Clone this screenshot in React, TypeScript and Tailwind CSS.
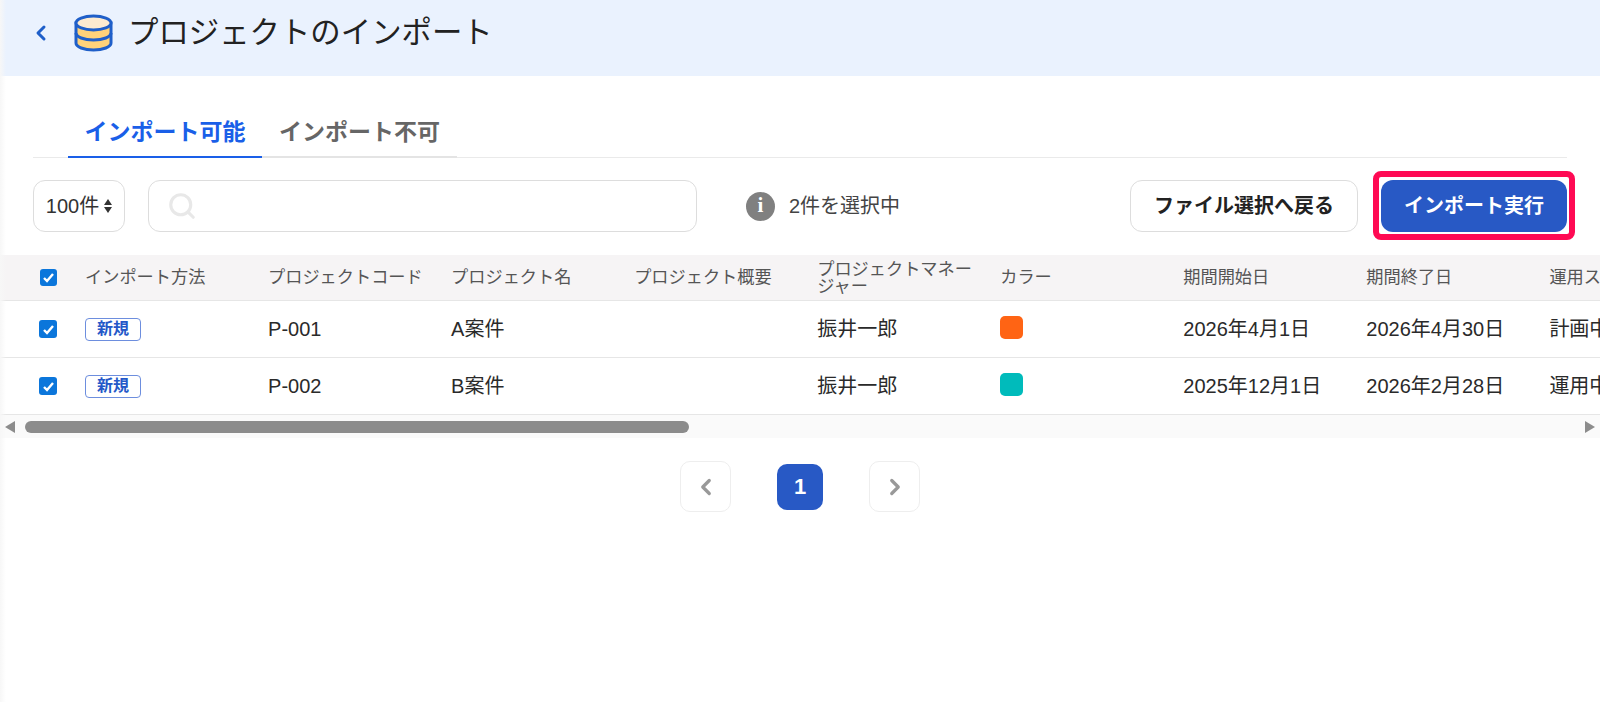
import { ChevronLeft, ChevronRight, Search } from 'lucide-react'

const COLUMNS = [
  'インポート方法',
  'プロジェクトコード',
  'プロジェクト名',
  'プロジェクト概要',
  'プロジェクトマネージャー',
  'カラー',
  '期間開始日',
  '期間終了日',
  '運用ステータス',
]

const ROWS = [
  { code: 'P-001', name: 'A案件', manager: '振井一郎', color: 'bg-[#ff6414]', start: '2026年4月1日', end: '2026年4月30日', status: '計画中' },
  { code: 'P-002', name: 'B案件', manager: '振井一郎', color: 'bg-[#00bbbb]', start: '2025年12月1日', end: '2026年2月28日', status: '運用中' },
]

const GRID = 'grid grid-cols-[85px_repeat(9,183.05px)] w-[1733px] items-center'

function DatabaseIcon() {
  return (
    <svg width="39" height="38" viewBox="0 0 39 38" className="shrink-0">
      <path d="M2 9v20c0 4 8 7 17.500 7S37 33 37 29V9z" fill="#ffd27a" stroke="#1f5fc9" strokeWidth="3" />
      <path d="M2 19c0 4 8 7 17.500 7S37 23 37 19" fill="none" stroke="#1f5fc9" strokeWidth="3" />
      <ellipse cx="19.500" cy="9" rx="17.500" ry="7" fill="#fdebd0" stroke="#1f5fc9" strokeWidth="3" />
    </svg>
  )
}

function Checkbox({ size }: { size: string }) {
  return (
    <span className={`flex items-center justify-center rounded-[3px] bg-[#0b76db] ${size}`}>
      <svg width="13" height="13" viewBox="0 0 13 13">
        <path d="M2 7l3 3 6-7" fill="none" stroke="#fff" strokeWidth="2.400" />
      </svg>
    </span>
  )
}

export default function App() {
  return (
    <div className="relative h-[702px] w-[1600px] overflow-hidden bg-white font-['Liberation_Sans','Noto_Sans_CJK_JP',sans-serif]">
      {/* Shadow of the collapsed side menu */}
      <div className="absolute left-0 top-0 h-full w-[6px] bg-gradient-to-r from-[#f7f7f7] to-transparent" />

      {/* Title bar */}
      <header className="flex h-[76px] items-center bg-[#eaf2fe] pb-[10px] pl-[29px]">
        <ChevronLeft size={24} strokeWidth={3} className="text-[#1f5fc9]" />
        <div className="ml-[21px]">
          <DatabaseIcon />
        </div>
        <h1 className="ml-[15px] text-[30.400px] font-normal text-[#222]">プロジェクトのインポート</h1>
      </header>

      {/* Tabs */}
      <div className="mx-[33px] mt-[35px] flex h-[47px] border-b border-[#eaeaea]">
        <div className="-mb-px ml-[35px] flex w-[194px] items-center justify-center border-b-[2px] border-[#1a5fe8] pb-[2px] text-[23px] font-bold text-[#1a5fe8]">
          インポート可能
        </div>
        <div className="-mb-px flex w-[195px] items-center justify-center border-b-[2px] border-[#e4e4e4] pb-[2px] text-[23px] font-bold text-[#666]">
          インポート不可
        </div>
      </div>

      {/* Toolbar */}
      <div className="mx-[33px] mt-[22px] flex h-[52px] items-center">
        <div className="flex h-full w-[92px] items-center justify-center gap-[5px] rounded-[12px] border border-[#dddddd] text-[20px] text-[#333]">
          100件
          <span className="flex flex-col gap-[2px]">
            <span className="h-0 w-0 border-x-[4px] border-b-[6px] border-x-transparent border-b-[#333]" />
            <span className="h-0 w-0 border-x-[4px] border-t-[6px] border-x-transparent border-t-[#333]" />
          </span>
        </div>
        <div className="ml-[23px] flex h-full w-[549px] items-center rounded-[12px] border border-[#dddddd] pl-[18px]">
          <Search size={30} strokeWidth={2.500} className="text-[#e8e8e8]" />
        </div>
        <div className="ml-[49px] flex h-[29px] w-[29px] items-center justify-center rounded-full bg-[#808080] font-['Liberation_Serif',serif] text-[21px] font-bold text-white">
          i
        </div>
        <span className="ml-[14px] text-[20px] text-[#444]">2件を選択中</span>
        <button className="ml-auto h-full w-[228px] rounded-[12px] border border-[#dddddd] text-[20px] font-bold text-[#222]">
          ファイル選択へ戻る
        </button>
        <div className="relative ml-[23px] h-full w-[186px]">
          <button className="h-full w-full rounded-[12px] bg-[#2859c5] text-[20px] font-bold text-white">
            インポート実行
          </button>
          {/* Highlight frame drawn over the button */}
          <span className="absolute -bottom-[8px] -left-[8px] -right-[8px] -top-[9px] rounded-[8px] border-[6px] border-[#ff0a54]" />
        </div>
      </div>

      {/* Table */}
      <div className="mt-[23px] w-[1600px] overflow-hidden">
        <div className={`${GRID} h-[46px] border-b border-[#e6e6e6] bg-[#f6f4f5] text-[17.200px] leading-[17px] text-[#555]`}>
          <div className="flex justify-center pl-[11px]">
            <Checkbox size="h-[17px] w-[17px]" />
          </div>
          {COLUMNS.map((label) => (
            <div key={label} className="whitespace-normal pr-4">
              {label}
            </div>
          ))}
        </div>
        {ROWS.map((row) => (
          <div key={row.code} className={`${GRID} h-[57px] border-b border-[#e6e6e6] text-[20px] text-[#2a2a2a]`}>
            <div className="flex justify-center pl-[11px]">
              <Checkbox size="h-[18px] w-[18px]" />
            </div>
            <div>
              <span className="flex h-[23px] w-[56px] items-center justify-center rounded-[4px] border border-[#6d8ede] text-[16px] font-bold text-[#2458c8]">
                新規
              </span>
            </div>
            <div>{row.code}</div>
            <div>{row.name}</div>
            <div />
            <div>{row.manager}</div>
            <div>
              <span className={`-mt-[3px] block h-[23px] w-[23px] rounded-[5px] ${row.color}`} />
            </div>
            <div>{row.start}</div>
            <div>{row.end}</div>
            <div>{row.status}</div>
          </div>
        ))}
        {/* Horizontal scrollbar */}
        <div className="flex h-[23px] items-center justify-between bg-[#fafafa] px-[5px]">
          <span className="h-0 w-0 border-y-[6px] border-r-[10px] border-y-transparent border-r-[#8c8c8c]" />
          <span className="ml-[10px] mr-auto h-[12px] w-[664px] rounded-full bg-[#8c8c8c]" />
          <span className="h-0 w-0 border-y-[6px] border-l-[10px] border-y-transparent border-l-[#8c8c8c]" />
        </div>
      </div>

      {/* Pagination */}
      <div className="mt-[23px] flex items-center justify-center gap-[46px]">
        <button className="flex h-[51px] w-[51px] items-center justify-center rounded-[10px] border border-[#eeeeee] text-[#999]">
          <ChevronLeft size={26} strokeWidth={3} />
        </button>
        <button className="h-[46px] w-[46px] rounded-[10px] bg-[#2859c5] text-[22px] font-bold text-white">1</button>
        <button className="flex h-[51px] w-[51px] items-center justify-center rounded-[10px] border border-[#eeeeee] text-[#999]">
          <ChevronRight size={26} strokeWidth={3} />
        </button>
      </div>
    </div>
  )
}
